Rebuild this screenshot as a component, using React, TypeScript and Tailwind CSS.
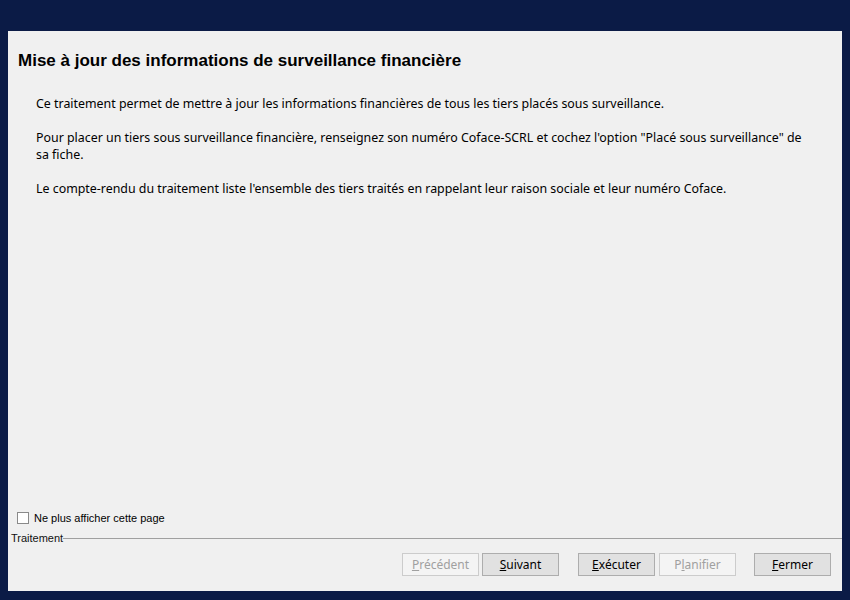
import React from 'react'

function Btn({ label, u, rest, disabled }: { label?: string; u: string; rest: string; disabled?: boolean }) {
  return (
    <button
      className={
        disabled
          ? 'w-[77px] h-[23px] border border-[#cccccc] bg-[#f4f4f4] text-[#a0a0a0] text-[12px] leading-none'
          : 'w-[77px] h-[23px] border border-[#adadad] bg-[#e1e1e1] text-black text-[12px] leading-none'
      }
      style={{ fontFamily: '"Noto Sans", "Open Sans", sans-serif' }}
    >
      {label}
      <span className="underline">{u}</span>
      {rest}
    </button>
  )
}

export default function App() {
  return (
    <div className="w-[850px] h-[600px] bg-[#0b1b46] pt-[31px] pl-[8px] overflow-hidden">
      <div className="w-[834px] h-[560px] bg-[#f0f0f0] flex flex-col">
        <h1
          className="mt-[19px] ml-[10px] text-[17px] leading-[22px] font-bold text-black"
          style={{ fontFamily: '"Liberation Sans", Arial, sans-serif' }}
        >
          Mise à jour des informations de surveillance financière
        </h1>
        <div
          className="mt-[23px] ml-[28px] w-[775px] text-[12.4px] leading-[17px] text-black flex flex-col gap-[17px]"
          style={{ fontFamily: '"Noto Sans", "Open Sans", sans-serif' }}
        >
          <p>Ce traitement permet de mettre à jour les informations financières de tous les tiers placés sous surveillance.</p>
          <p>
            Pour placer un tiers sous surveillance financière, renseignez son numéro Coface-SCRL et cochez l'option "Placé sous surveillance" de sa fiche.
          </p>
          <p>Le compte-rendu du traitement liste l'ensemble des tiers traités en rappelant leur raison sociale et leur numéro Coface.</p>
        </div>
        <div className="flex-1" />
        <label
          className="ml-[9px] flex items-center gap-[5px] text-[11px] text-black"
          style={{ fontFamily: '"Liberation Sans", Arial, sans-serif' }}
        >
          <span className="w-[12px] h-[12px] border border-[#8a8a8a] bg-white" />
          Ne plus afficher cette page
        </label>
        <div
          className="mt-[6px] ml-[3px] flex items-center text-[11px] leading-[13px] text-[#111]"
          style={{ fontFamily: '"Liberation Sans", Arial, sans-serif' }}
        >
          <span>Traitement</span>
          <div className="flex-1 h-px bg-[#a0a0a0]" />
        </div>
        <div className="mt-[8px] mb-[15px] flex items-center pl-[394px]">
          <Btn u="P" rest="récédent" disabled />
          <div className="w-[3px]" />
          <Btn u="S" rest="uivant" />
          <div className="w-[19px]" />
          <Btn u="E" rest="xécuter" />
          <div className="w-[4px]" />
          <Btn label="P" u="l" rest="anifier" disabled />
          <div className="w-[18px]" />
          <Btn u="F" rest="ermer" />
        </div>
      </div>
    </div>
  )
}
